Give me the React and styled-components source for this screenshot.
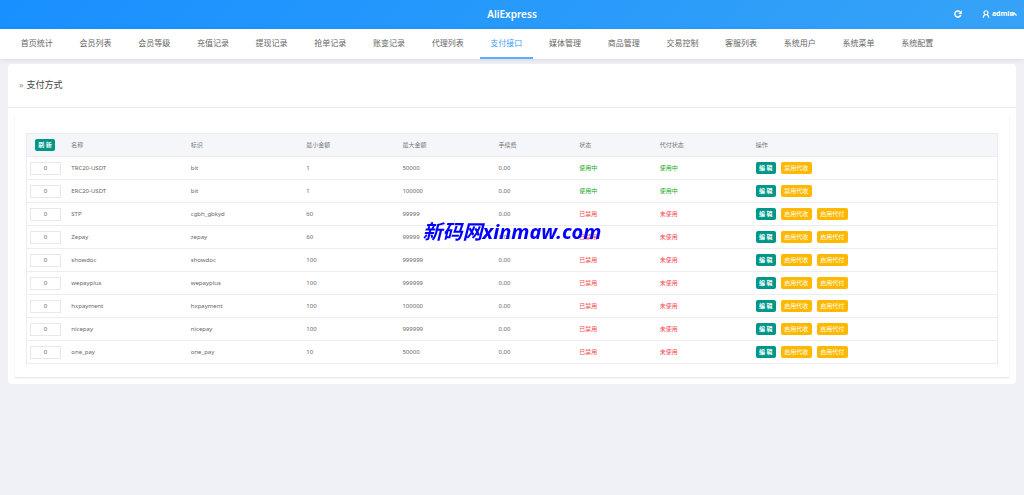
import React from "react";
import styled, { createGlobalStyle } from "styled-components";

const GlobalStyle = createGlobalStyle`
  * {
    box-sizing: border-box;
  }

  body {
    margin: 0;
    background: #f0f1f6;
    color: #666;
    font-family: "Noto Sans", "Noto Sans CJK SC", sans-serif;
    font-size: 6px;
  }

  button,
  input {
    margin: 0;
    font-family: inherit;
  }
`;

const TopBar = styled.header`
  display: grid;
  grid-template-columns: 1fr auto 1fr;
  align-items: center;
  height: 29px;
  padding: 0 7px 2px;
  background: linear-gradient(135deg, #1890ff, #36a3f7);
  color: #fff;
`;

const Brand = styled.h1`
  grid-column: 2;
  margin: 0;
  font-size: 10px;
  font-weight: 600;
  line-height: 14px;
`;

const TopActions = styled.div`
  display: flex;
  justify-content: flex-end;
  align-items: center;
  gap: 20px;
`;

const IconButton = styled.button`
  display: flex;
  padding: 0;
  border: 0;
  background: none;
  color: inherit;
  cursor: pointer;
`;

const UserLink = styled.a`
  position: relative;
  display: flex;
  align-items: center;
  gap: 2px;
  padding-right: 3px;
  color: inherit;
  font-size: 7px;
  font-weight: 700;
  line-height: 10px;
  text-decoration: none;
`;

const Caret = styled.svg`
  position: absolute;
  right: 0;
  top: 3px;
`;

const Nav = styled.nav`
  position: relative;
  display: grid;
  grid-template-columns: repeat(16, 1fr);
  gap: 5px;
  height: 30px;
  padding: 0 80px 0 10px;
  background: #fff;
  box-shadow: 0 1px 5px rgba(0, 21, 41, 0.1);
`;

const NavLink = styled.a`
  border-bottom: 2px solid ${({ $active }) => ($active ? "#5aadff" : "transparent")};
  color: ${({ $active }) => ($active ? "#409eff" : "#666")};
  font-size: 8px;
  line-height: 28px;
  text-align: center;
  text-decoration: none;
  white-space: nowrap;
`;

const Card = styled.main`
  margin: 5px 8px 0;
  padding-bottom: 7px;
  border-radius: 4px;
  background: #fff;
`;

const CardHeader = styled.div`
  display: flex;
  align-items: center;
  gap: 3px;
  height: 44px;
  padding: 0 11px 2px;
  border-bottom: 1px solid #ebebed;
`;

const Marker = styled.span`
  color: #999;
  font-size: 9px;
`;

const CardTitle = styled.h2`
  margin: 0;
  color: #444;
  font-size: 9px;
  font-weight: 400;
`;

const Panel = styled.section`
  margin: 6px 7px 0;
  padding: 19px 11px 13px;
  border-radius: 1px;
  box-shadow: 0 1px 2px rgba(0, 0, 0, 0.12);
`;

const Table = styled.table`
  width: 100%;
  table-layout: fixed;
  border-collapse: collapse;
  border: 1px solid #ebedf0;
`;

const Col = styled.col`
  width: ${({ $width }) => $width};
`;

const Row = styled.tr`
  height: 23px;
  border-bottom: 1px solid #ebedf0;
`;

const HeadCell = styled.th`
  padding: 0 ${({ $tight }) => ($tight ? "8px" : "6px")};
  background: #f4f6fa;
  color: #777;
  font-weight: 400;
  line-height: 12px;
  text-align: left;
  white-space: nowrap;
`;

const Cell = styled.td`
  padding: 0 ${({ $tight }) => ($tight ? "3px" : "6px")};
  color: ${({ $tone }) => $tone || "#666"};
  line-height: 12px;
  white-space: nowrap;
`;

const SortInput = styled.input`
  display: block;
  width: 31px;
  height: 13px;
  padding: 0;
  border: 1px solid #e8e8e8;
  background: #fff;
  color: #666;
  font-size: 6px;
  text-align: center;
`;

const Actions = styled.div`
  display: flex;
  gap: 5px;
`;

const SmallButton = styled.button`
  height: 12px;
  min-width: ${({ $wide }) => ($wide ? "31px" : "20px")};
  padding: 0 3px;
  border: 0;
  border-radius: 2px;
  background: ${({ $wide }) => ($wide ? "#ffb800" : "#009688")};
  color: #fff;
  font-size: 6px;
  font-weight: ${({ $strong }) => ($strong ? 700 : 400)};
  line-height: 12px;
  white-space: nowrap;
  cursor: pointer;
`;

const Watermark = styled.div`
  position: fixed;
  top: 232px;
  left: 50%;
  transform: translate(-50%, -50%);
  color: #0000ff;
  font-size: 20px;
  font-style: italic;
  font-weight: 700;
  line-height: 24px;
  white-space: nowrap;
  pointer-events: none;
`;

const navItems = [
  "首页统计",
  "会员列表",
  "会员等级",
  "充值记录",
  "提现记录",
  "抢单记录",
  "账变记录",
  "代理列表",
  "支付接口",
  "媒体管理",
  "商品管理",
  "交易控制",
  "客服列表",
  "系统用户",
  "系统菜单",
  "系统配置",
];

const columnWidths = ["4%", "12.3%", "11.9%", "9.9%", "9.9%", "8.3%", "8.3%", "9.9%", "auto"];

const headings = ["名称", "标识", "最小金额", "最大金额", "手续费", "状态", "代付状态", "操作"];

const channels = [
  { name: "TRC20-USDT", code: "bit", min: 1, max: 50000, enabled: true },
  { name: "ERC20-USDT", code: "bit", min: 1, max: 100000, enabled: true },
  { name: "STP", code: "cgbh_gbkyd", min: 60, max: 99999 },
  { name: "Zepay", code: "zepay", min: 60, max: 99999 },
  { name: "showdoc", code: "showdoc", min: 100, max: 999999 },
  { name: "wepayplus", code: "wepayplus", min: 100, max: 999999 },
  { name: "hxpayment", code: "hxpayment", min: 100, max: 100000 },
  { name: "nicepay", code: "nicepay", min: 100, max: 999999 },
  { name: "one_pay", code: "one_pay", min: 10, max: 50000 },
];

function RefreshIcon() {
  return (
    <svg width="8" height="8" viewBox="0 0 16 16" fill="none" stroke="currentColor" strokeWidth="3">
      <path d="M13.6 9.5A6 6 0 1 1 11.8 3.6" />
      <path d="M15.6 0.4v7.4H8.2z" fill="currentColor" stroke="none" />
    </svg>
  );
}

function UserIcon() {
  return (
    <svg width="8" height="8" viewBox="0 0 16 16" fill="none" stroke="currentColor" strokeWidth="2.4">
      <circle cx="8" cy="5.5" r="4" />
      <path d="M2.4 15.5c0-3.5 1.6-5.2 3.8-6.2M13.6 15.5c0-3.5-1.6-5.2-3.8-6.2" />
    </svg>
  );
}

function ChannelRow({ channel }) {
  const tone = channel.enabled ? "#16a81e" : "#f5474d";

  return (
    <Row>
      <Cell $tight>
        <SortInput type="text" defaultValue="0" aria-label={channel.name} />
      </Cell>
      <Cell>{channel.name}</Cell>
      <Cell>{channel.code}</Cell>
      <Cell>{channel.min}</Cell>
      <Cell>{channel.max}</Cell>
      <Cell>0.00</Cell>
      <Cell $tone={tone}>{channel.enabled ? "使用中" : "已禁用"}</Cell>
      <Cell $tone={tone}>{channel.enabled ? "使用中" : "未使用"}</Cell>
      <Cell>
        <Actions>
          <SmallButton $strong>编 辑</SmallButton>
          <SmallButton $wide>{channel.enabled ? "禁用代收" : "启用代收"}</SmallButton>
          {!channel.enabled && <SmallButton $wide>启用代付</SmallButton>}
        </Actions>
      </Cell>
    </Row>
  );
}

function App() {
  return (
    <>
      <GlobalStyle />
      <TopBar>
        <Brand>AliExpress</Brand>
        <TopActions>
          <IconButton aria-label="刷新">
            <RefreshIcon />
          </IconButton>
          <UserLink href="#user">
            <UserIcon />
            admin
            <Caret width="6" height="5" viewBox="0 0 6 5" fill="none" stroke="currentColor" strokeWidth="1.3">
              <path d="M0.4 3.4L3 1l2.6 2.4" />
            </Caret>
          </UserLink>
        </TopActions>
      </TopBar>

      <Nav>
        {navItems.map((item) => (
          <NavLink key={item} href="#menu" $active={item === "支付接口"}>
            {item}
          </NavLink>
        ))}
      </Nav>

      <Card>
        <CardHeader>
          <Marker>»</Marker>
          <CardTitle>支付方式</CardTitle>
        </CardHeader>
        <Panel>
          <Table>
            <colgroup>
              {columnWidths.map((width, i) => (
                <Col key={i} $width={width} />
              ))}
            </colgroup>
            <thead>
              <Row>
                <HeadCell $tight>
                  <SmallButton $strong>刷 新</SmallButton>
                </HeadCell>
                {headings.map((heading) => (
                  <HeadCell key={heading}>{heading}</HeadCell>
                ))}
              </Row>
            </thead>
            <tbody>
              {channels.map((channel) => (
                <ChannelRow key={channel.name} channel={channel} />
              ))}
            </tbody>
          </Table>
        </Panel>
      </Card>

      <Watermark>新码网xinmaw.com</Watermark>
    </>
  );
}

export default App;
